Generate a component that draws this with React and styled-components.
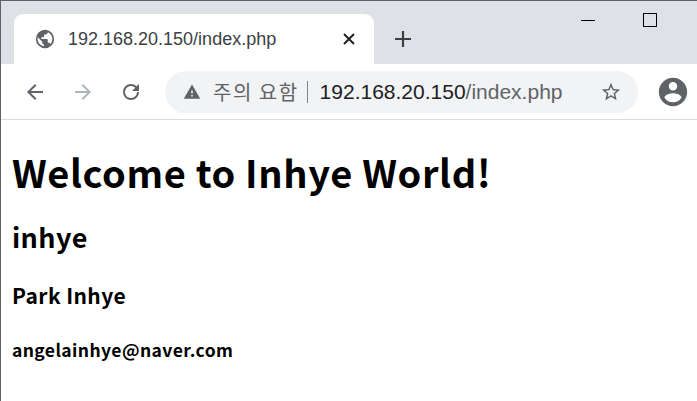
import styled, { createGlobalStyle } from 'styled-components';

const Global = createGlobalStyle`
  html, body { margin: 0; padding: 0; background: #fff; }
  body { font-family: 'Noto Sans CJK KR', 'Noto Sans', sans-serif; }
`;

const Window = styled.div`
  width: 697px;
  height: 401px;
  box-sizing: border-box;
  border-left: 1px solid #5f6368;
  border-top: 1px solid #5f6368;
  overflow: hidden;
  background: #fff;
`;

const TabStrip = styled.div`
  height: 63px;
  background: #dee1e6;
  display: flex;
  align-items: flex-end;
  padding-left: 13px;
  position: relative;
`;

const Tab = styled.div`
  width: 360px;
  height: 50px;
  background: #fff;
  border-radius: 9px 9px 0 0;
  display: flex;
  align-items: center;
  padding: 0 18px 0 20px;
  box-sizing: border-box;
  gap: 12px;
`;

const TabTitle = styled.span`
  flex: 1;
  font-family: 'Liberation Sans', Arial, sans-serif;
  font-size: 18px;
  color: #3c4043;
`;

const NewTab = styled.div`
  height: 50px;
  display: flex;
  align-items: center;
  margin-left: 20px;
`;

const WinControls = styled.div`
  position: absolute;
  top: 12px;
  right: 40px;
  display: flex;
  gap: 48px;
  align-items: center;
`;

const Toolbar = styled.div`
  height: 55px;
  display: flex;
  align-items: center;
  padding-left: 22px;
  border-bottom: 1px solid #dadce0;
`;

const NavBtn = styled.div`
  width: 48px;
  display: flex;
  align-items: center;
`;

const Omnibox = styled.div`
  margin-left: -2px;
  width: 473px;
  height: 42px;
  border-radius: 21px;
  background: #f1f3f4;
  display: flex;
  align-items: center;
  padding: 0 16px 0 18px;
  box-sizing: border-box;
`;

const Warn = styled.span`
  color: #5f6368;
  margin-left: 12px;
  font-family: 'Noto Sans CJK KR', sans-serif;
  font-size: 20px;
  letter-spacing: 1.5px;
`;

const Sep = styled.span`
  width: 1px;
  height: 22px;
  background: #80868b;
  margin: 0 12px 0 8px;
`;

const Url = styled.span`
  flex: 1;
  font-family: 'Liberation Sans', Arial, sans-serif;
  font-size: 21px;
  color: #202124;
  span { color: #5f6368; }
`;

const Avatar = styled.div`
  margin-left: 18px;
  display: flex;
`;

const Content = styled.main`
  padding: 0 11px;
  font-family: 'Noto Sans CJK KR', 'Noto Sans', sans-serif;
  color: #000;
  h1 { font-size: 38px; margin: 24px 0 0; line-height: 56px; font-weight: 700; letter-spacing: 0.6px; }
  h2 { font-size: 27px; margin: 17px 0 0; line-height: 40px; letter-spacing: 0.4px; }
  h3 { font-size: 21px; margin: 23px 0 0; line-height: 30px; letter-spacing: 0.4px; }
  h4 { font-size: 17.5px; margin: 27px 0 0; line-height: 26px; letter-spacing: 0.4px; }
`;

export default function App() {
  return (
    <Window>
      <Global />
      <TabStrip>
        <Tab>
          <svg width="22" height="22" viewBox="0 0 24 24"><path fill="#5f6368" d="M12 2a10 10 0 100 20 10 10 0 000-20zm-1 17.9A8 8 0 014.1 10L9 15v1a2 2 0 002 2v1.9zm6.9-2.5A2 2 0 0016 16h-1v-3a1 1 0 00-1-1H8v-2h2a1 1 0 001-1V7h2a2 2 0 002-2v-.4a8 8 0 012.9 12.8z"/></svg>
          <TabTitle>192.168.20.150/index.php</TabTitle>
          <svg width="14" height="14" viewBox="0 0 14 14"><path d="M2 2l10 10M12 2L2 12" stroke="#202124" strokeWidth="2"/></svg>
        </Tab>
        <NewTab>
          <svg width="18" height="18" viewBox="0 0 18 18"><path d="M9 1v16M1 9h16" stroke="#3c4043" strokeWidth="2.2"/></svg>
        </NewTab>
        <WinControls>
          <svg width="14" height="14" viewBox="0 0 14 14"><path d="M0 7.5h14" stroke="#000" strokeWidth="1"/></svg>
          <svg width="14" height="14" viewBox="0 0 14 14"><rect x="0.5" y="0.5" width="13" height="13" fill="none" stroke="#000"/></svg>
        </WinControls>
      </TabStrip>
      <Toolbar>
        <NavBtn>
          <svg width="24" height="24" viewBox="0 0 24 24"><path fill="#5f6368" d="M20 11H7.83l5.59-5.59L12 4l-8 8 8 8 1.41-1.41L7.83 13H20v-2z"/></svg>
        </NavBtn>
        <NavBtn>
          <svg width="24" height="24" viewBox="0 0 24 24"><path fill="#b1b4b8" d="M12 4l-1.41 1.41L16.17 11H4v2h12.17l-5.58 5.59L12 20l8-8z"/></svg>
        </NavBtn>
        <NavBtn>
          <svg width="24" height="24" viewBox="0 0 24 24"><path fill="#5f6368" d="M17.65 6.35A7.96 7.96 0 0012 4a8 8 0 108 8h-2a6 6 0 11-1.78-4.22L13 11h7V4l-2.35 2.35z"/></svg>
        </NavBtn>
        <Omnibox>
          <svg width="18" height="18" viewBox="0 0 24 24"><path fill="#5f6368" d="M1 21h22L12 2 1 21zm12-3h-2v-2h2v2zm0-4h-2v-4h2v4z"/></svg>
          <Warn>주의 요함</Warn>
          <Sep />
          <Url>192.168.20.150<span>/index.php</span></Url>
          <svg width="22" height="22" viewBox="0 0 24 24"><path fill="#5f6368" d="M22 9.24l-7.19-.62L12 2 9.19 8.63 2 9.24l5.46 4.73L5.820 21 12 17.27 18.18 21l-1.63-7.03L22 9.24zM12 15.4l-3.76 2.27 1-4.28-3.32-2.880 4.38-.38L12 6.1l1.71 4.04 4.38.38-3.32 2.88 1 4.28L12 15.4z"/></svg>
        </Omnibox>
        <Avatar>
          <svg width="34" height="34" viewBox="0 0 24 24"><path fill="#5f6368" d="M12 2C6.48 2 2 6.48 2 12s4.48 10 10 10 10-4.48 10-10S17.52 2 12 2zm0 3c1.66 0 3 1.34 3 3s-1.34 3-3 3-3-1.34-3-3 1.34-3 3-3zm0 14.2a7.2 7.2 0 01-6-3.22c.03-1.99 4-3.08 6-3.08 1.99 0 5.970 1.09 6 3.08a7.2 7.2 0 01-6 3.22z"/></svg>
        </Avatar>
      </Toolbar>
      <Content>
        <h1>Welcome to Inhye World!</h1>
        <h2>inhye</h2>
        <h3>Park Inhye</h3>
        <h4>angelainhye@naver.com</h4>
      </Content>
    </Window>
  );
}
